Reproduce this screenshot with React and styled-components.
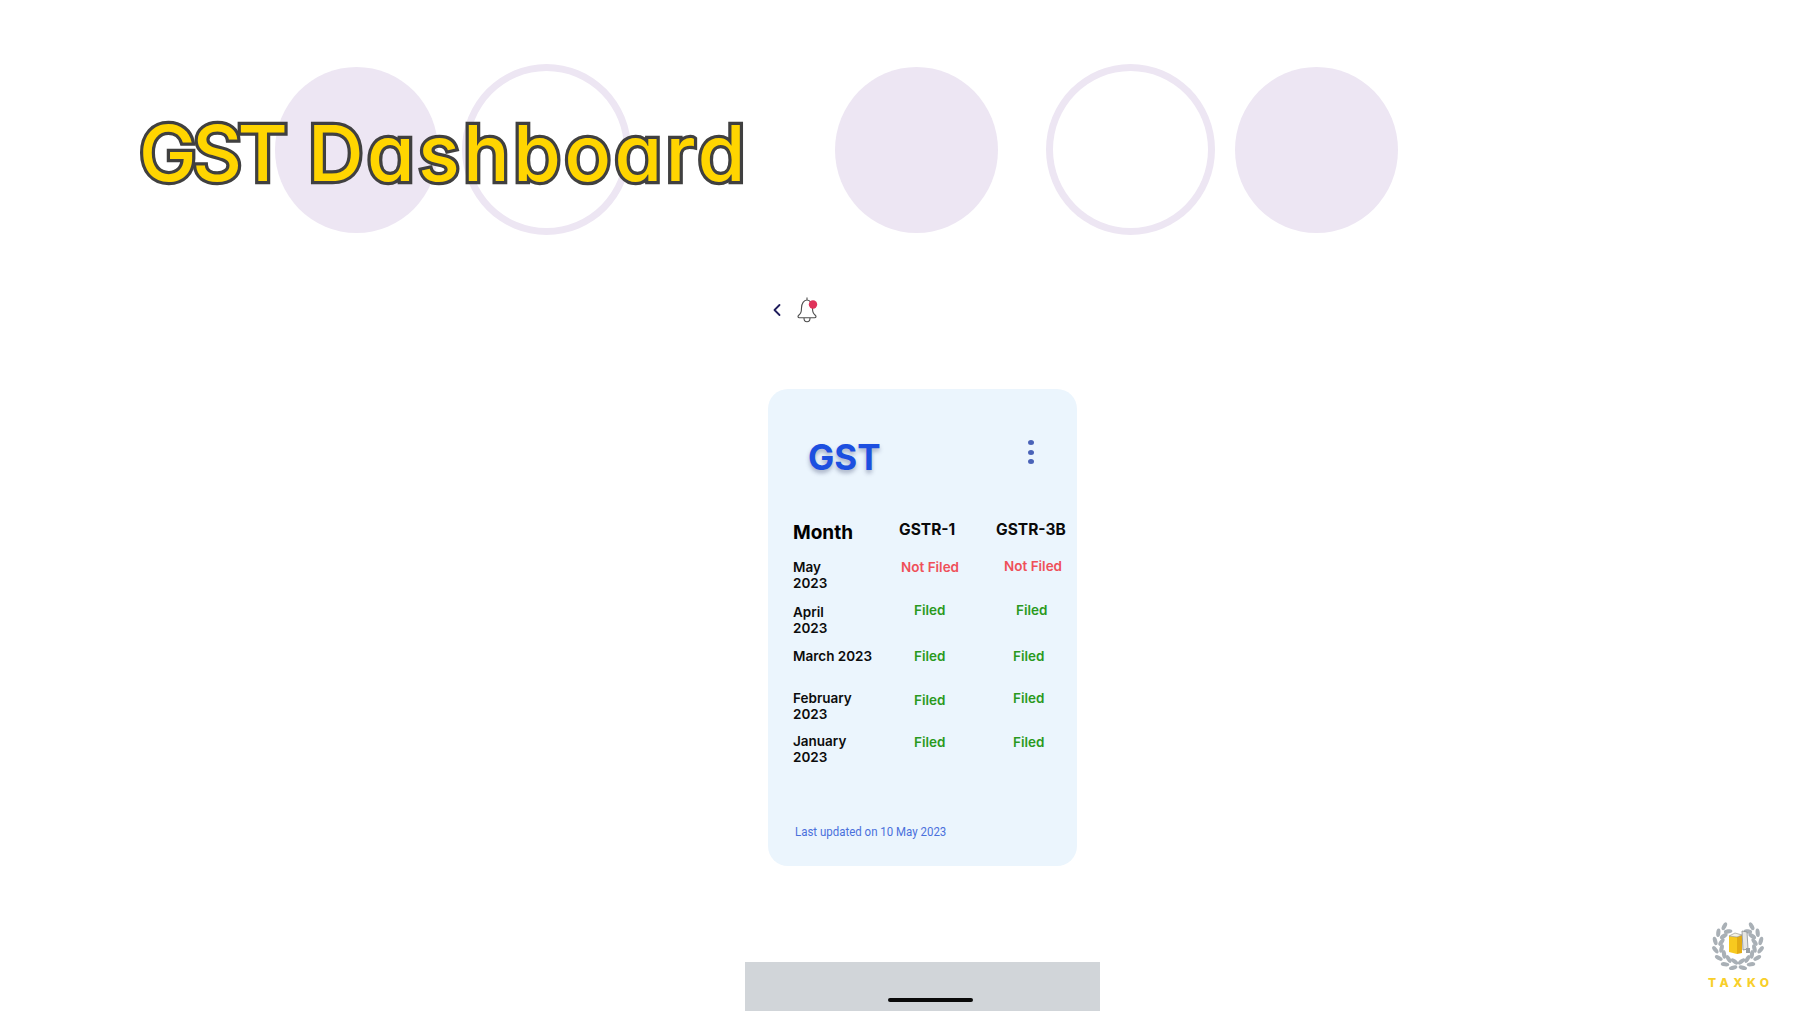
import styled, { createGlobalStyle } from 'styled-components';
import { ChevronLeft } from 'lucide-react';

const RING = '#ede6f3';

const circles = [
  { gap: 0, ring: false },
  { gap: 24, ring: true },
  { gap: 204, ring: false },
  { gap: 48, ring: true },
  { gap: 20, ring: false },
];

const rows = [
  { month: 'May\n2023', height: 45, first: { text: 'Not Filed', x: 2, y: 0 }, second: { text: 'Not Filed', x: 8, y: -1 } },
  { month: 'April\n2023', height: 44, first: { text: 'Filed', x: 15, y: -2 }, second: { text: 'Filed', x: 20, y: -2 } },
  { month: 'March 2023', height: 42, first: { text: 'Filed', x: 15, y: 0 }, second: { text: 'Filed', x: 17, y: 0 } },
  { month: 'February\n2023', height: 43, first: { text: 'Filed', x: 15, y: 2 }, second: { text: 'Filed', x: 17, y: 0 } },
  { month: 'January\n2023', height: 40, first: { text: 'Filed', x: 15, y: 1 }, second: { text: 'Filed', x: 17, y: 1 } },
];

// laurel leaves sit in pairs along an arc, from the bottom of the wreath up
const leaves = [];
for (let i = 0; i < 7; i++) {
  const deg = 102 + i * 22;
  const a = deg * (Math.PI / 180);
  const x = Math.cos(a) * 20;
  const y = Math.sin(a) * 20;
  [[-1, 26], [1, -26]].forEach(([side, turn]) => {
    leaves.push({
      x: x + Math.cos(a) * side * 3.2,
      y: y + Math.sin(a) * side * 3.2,
      angle: deg + turn,
    });
  });
}

function Wreath() {
  return (
    <svg width="58" height="50" viewBox="-29 -25 58 50">
      {[1, -1].map((side) => (
        <g key={side} transform={`scale(${side} 1)`}>
          {leaves.map((leaf, index) => (
            <ellipse
              key={index}
              cx={leaf.x}
              cy={leaf.y}
              rx="2.100"
              ry="4.300"
              fill="#a9b0b6"
              transform={`rotate(${leaf.angle} ${leaf.x} ${leaf.y})`}
            />
          ))}
        </g>
      ))}
      <path d="M-9 -9 L-1 -8 L-1 9 L-9 7 Z" fill="#f7c91f" />
      <path d="M-1 -8 L4 -10 L4 8 L-1 9 Z" fill="#e3ac12" />
      <path d="M-9 -9 L-3 -12 L4 -10 L-1 -8 Z" fill="#f4f1e4" stroke="#8b8b80" strokeWidth="0.6" />
      <path d="M4 -14 L9 -13 L10 4 L5 5 Z" fill="#e6e6e2" stroke="#8a8f92" strokeWidth="0.8" />
      <path d="M8 3 L12 3 L12 8 L8 8 Z" fill="#9aa0a4" />
    </svg>
  );
}

function Bell() {
  return (
    <svg width="24" height="28" viewBox="0 0 24 28" fill="none" stroke="#4d4d4d" strokeWidth="1.1">
      <path d="M11 1.500v2.400M2.500 19.500c2-2 3-3 3-7.500 0-4.400 2.400-8 5.500-8s5.500 3.600 5.500 8c0 4.500 1 5.500 3 7.500 1 .9.4 2.200-.8 2.200H3.300c-1.200 0-1.800-1.300-.8-2.200z" />
      <path d="M8 22c0 5 6 5 6 0" />
      <circle cx="17" cy="8.500" r="4.200" fill="#e0335b" stroke="none" />
    </svg>
  );
}

export default function App() {
  return (
    <Page>
      <GlobalStyle />
      <Hero>
        {circles.map((circle, index) => (
          <Circle key={index} $gap={circle.gap} $ring={circle.ring} />
        ))}
        <Title>
          <TitleWord $spacing={-4.4}>GST</TitleWord> <TitleWord $spacing={3.6}>Dashboard</TitleWord>
        </Title>
      </Hero>
      <Phone>
        <Toolbar>
          <ChevronLeft size={20} color="#1f1d5c" strokeWidth={2.2} />
          <Bell />
        </Toolbar>
        <Card>
          <CardHead>
            <CardTitle>GST</CardTitle>
            <Dots>
              <i />
              <i />
              <i />
            </Dots>
          </CardHead>
          <HeadRow>
            <MonthHead>Month</MonthHead>
            <ColHead>GSTR-1</ColHead>
            <ColHead>GSTR-3B</ColHead>
          </HeadRow>
          {rows.map((row) => (
            <Row key={row.month} $height={row.height}>
              <MonthCell>{row.month}</MonthCell>
              <Status $filed={row.first.text === 'Filed'} $x={row.first.x} $y={row.first.y}>{row.first.text}</Status>
              <Status $filed={row.second.text === 'Filed'} $x={row.second.x} $y={row.second.y}>{row.second.text}</Status>
            </Row>
          ))}
          <Updated>Last updated on 10 May 2023</Updated>
        </Card>
      </Phone>
      <Footer>
        <HomeBar>
          <Indicator />
        </HomeBar>
        <Logo>
          <Wreath />
          <LogoText>TAXKO</LogoText>
        </Logo>
      </Footer>
    </Page>
  );
}

const GlobalStyle = createGlobalStyle`
  html, body {
    margin: 0;
    background: #fff;
  }
  body {
    font-family: Inter, "Liberation Sans", sans-serif;
  }
`;

const Page = styled.div`
  width: 1798px;
  height: 1011px;
  overflow: hidden;
  display: flex;
  flex-direction: column;
`;

const Hero = styled.div`
  position: relative;
  display: flex;
  align-items: center;
  height: 171px;
  margin-top: 64px;
  padding-left: 275px;
`;

const Circle = styled.div`
  box-sizing: border-box;
  flex: none;
  margin-left: ${(p) => p.$gap}px;
  width: ${(p) => (p.$ring ? 169 : 163)}px;
  height: ${(p) => (p.$ring ? 171 : 166)}px;
  border-radius: 50%;
  background: ${(p) => (p.$ring ? 'transparent' : RING)};
  border: ${(p) => (p.$ring ? `7px solid ${RING}` : 'none')};
`;

const Title = styled.h1`
  position: absolute;
  left: 139px;
  top: 38px;
  margin: 0;
  font-family: Inter, sans-serif;
  font-feature-settings: "cv11";
  font-size: 77px;
  line-height: 102px;
  font-weight: 500;
  word-spacing: 4px;
  white-space: nowrap;
  color: #ffd500;
  -webkit-text-stroke: 6.500px #404040;
  paint-order: stroke fill;
`;

const TitleWord = styled.span`
  letter-spacing: ${(p) => p.$spacing}px;
`;

const Phone = styled.div`
  width: 355px;
  margin: 60px 0 0 745px;
  display: flex;
  flex-direction: column;
`;

const Toolbar = styled.div`
  display: flex;
  align-items: center;
  gap: 9px;
  height: 30px;
  padding-left: 22px;
  margin-bottom: 64px;
`;

const Card = styled.div`
  box-sizing: border-box;
  width: 309px;
  height: 477px;
  margin-left: 23px;
  padding: 0 0 0 25px;
  background: #ebf5fd;
  border-radius: 20px;
`;

const CardHead = styled.div`
  display: flex;
  justify-content: space-between;
  height: 117px;
  padding: 48px 43px 0 15px;
  box-sizing: border-box;
`;

const CardTitle = styled.div`
  font-size: 35px;
  line-height: 40px;
  font-weight: 700;
  color: #1c4fe0;
  text-shadow: 0 3px 4px rgba(60, 70, 110, 0.4);
`;

const Dots = styled.div`
  display: flex;
  flex-direction: column;
  gap: 4.500px;
  margin-top: 3px;
  i {
    width: 6px;
    height: 5px;
    border-radius: 50%;
    background: #4a63b8;
  }
`;

const HeadRow = styled.div`
  display: grid;
  grid-template-columns: 106px 97px 1fr;
  align-items: center;
  height: 53px;
`;

const MonthHead = styled.div`
  font-size: 19px;
  font-weight: 700;
  color: #000;
  margin-bottom: 1px;
`;

const ColHead = styled.div`
  font-size: 15.500px;
  font-weight: 700;
  color: #0a0a0a;
  margin-bottom: 7px;
`;

const Row = styled.div`
  display: grid;
  grid-template-columns: 106px 97px 1fr;
  height: ${(p) => p.$height}px;
`;

const MonthCell = styled.div`
  font-size: 13.500px;
  line-height: 16px;
  font-weight: 600;
  color: #0c0c0c;
  white-space: pre-line;
`;

const Status = styled.div`
  font-size: 13.500px;
  line-height: 16px;
  font-weight: 600;
  margin: ${(p) => p.$y}px 0 0 ${(p) => p.$x}px;
  color: ${(p) => (p.$filed ? '#2a9a1e' : '#ef5059')};
`;

const Updated = styled.div`
  margin: 50px 0 0 2px;
  font-family: Roboto, sans-serif;
  font-size: 13.500px;
  line-height: 16px;
  color: #4a70dc;
  white-space: nowrap;
  transform: scaleX(0.85);
  transform-origin: left;
`;

const Footer = styled.div`
  flex: 1;
  display: grid;
  grid-template-columns: 745px 355px 1fr;
  align-items: end;
`;

const HomeBar = styled.div`
  grid-column: 2;
  height: 49px;
  background: #d1d5d9;
  display: flex;
  justify-content: center;
  padding-left: 15px;
  box-sizing: border-box;
`;

const Indicator = styled.div`
  width: 85px;
  height: 4px;
  margin-top: 36px;
  border-radius: 2px;
  background: #0a0a0a;
`;

const Logo = styled.div`
  grid-column: 3;
  justify-self: end;
  display: flex;
  flex-direction: column;
  align-items: center;
  gap: 7px;
  margin: 0 29px 22px 0;
`;

const LogoText = styled.div`
  font-size: 12px;
  line-height: 12px;
  font-weight: 800;
  letter-spacing: 4.500px;
  margin-right: -4.500px;
  color: #f8cf2a;
`;
